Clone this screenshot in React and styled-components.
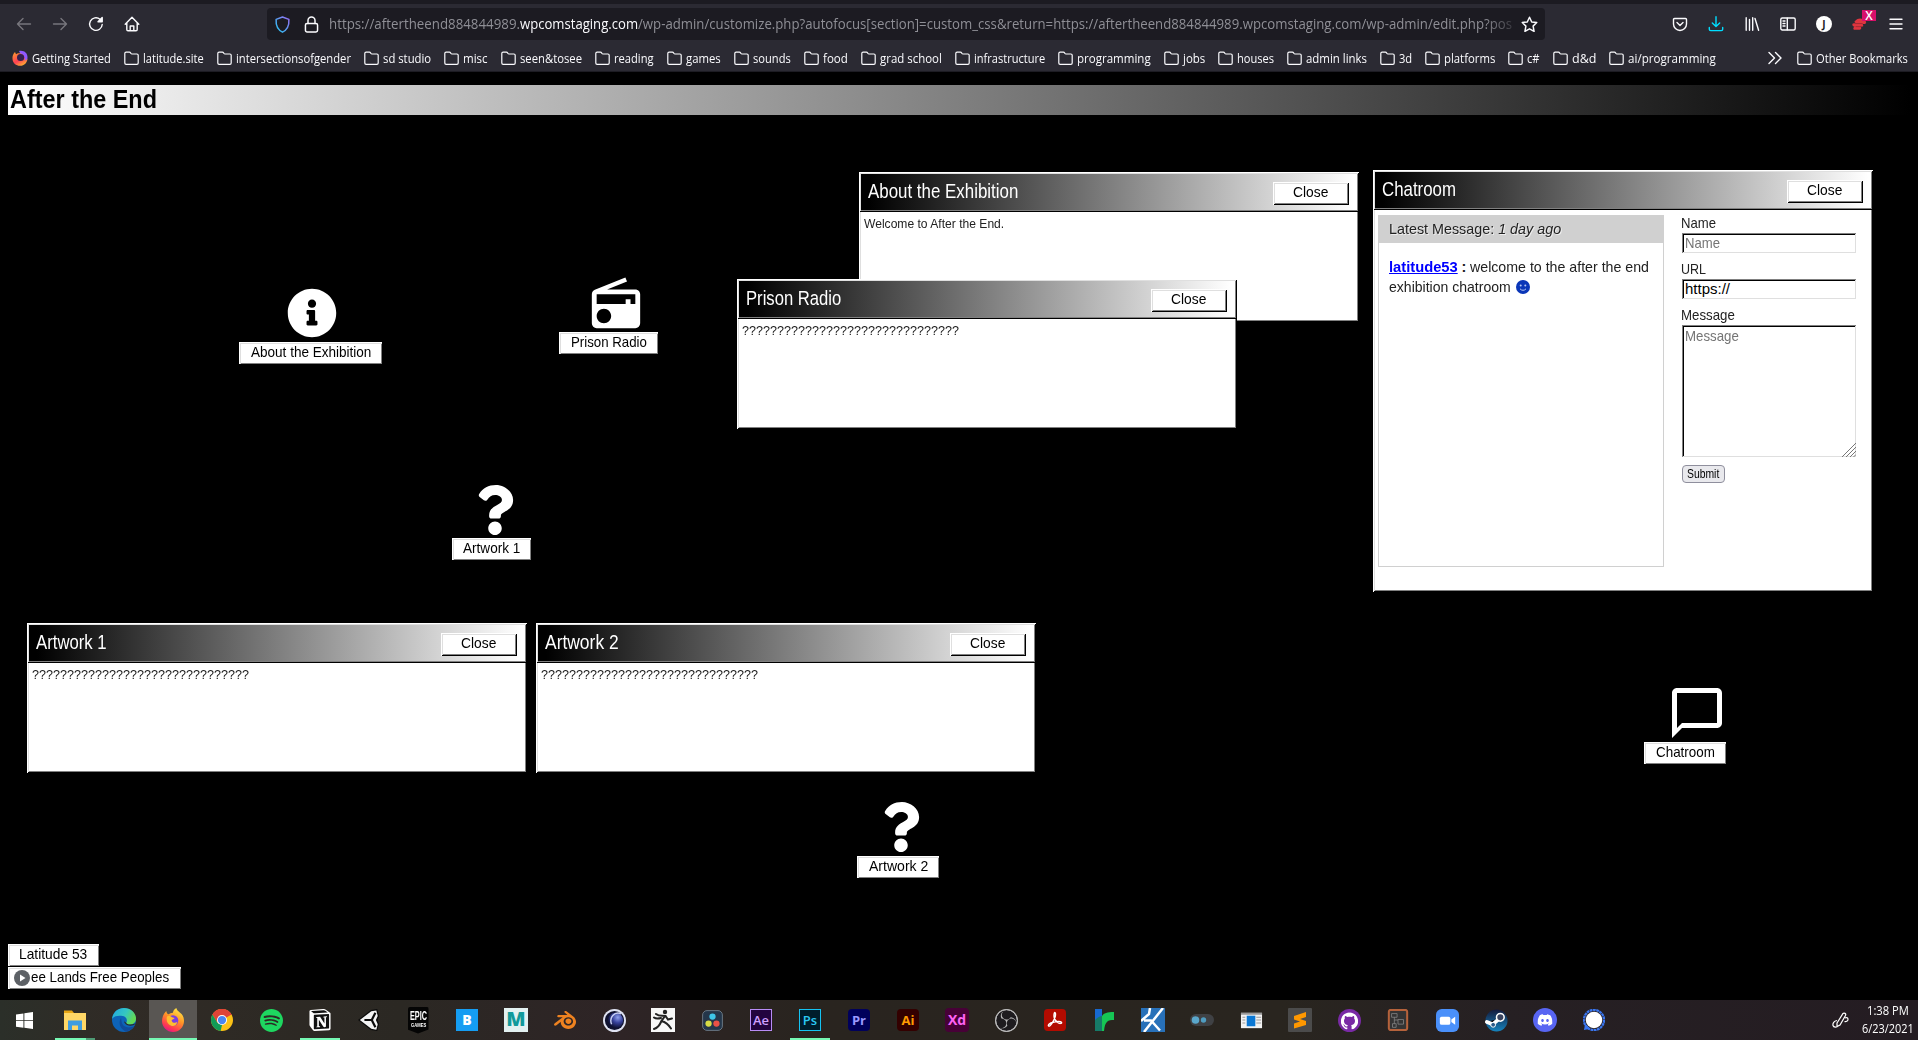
import React, { useLayoutEffect, useRef, useState } from "react";
import styled, { createGlobalStyle, css } from "styled-components";
import { FaInfoCircle, FaQuestion } from "react-icons/fa";
import { MdRadio, MdChatBubbleOutline } from "react-icons/md";
import { SiSpotify, SiBlender, SiObsstudio, SiGithub, SiDiscord, SiNotion } from "react-icons/si";

const pixelFont = `"Liberation Sans", Arial, sans-serif`;
const uiFont = `"Open Sans", "Noto Sans", sans-serif`;

const GlobalStyle = createGlobalStyle`
  * { box-sizing: border-box; }
  html, body { margin: 0; background: #000; overflow: hidden; }
  body { font-family: ${pixelFont}; }
`;

/* ---------- text squeezed to a set width ---------- */
const FitBox = styled.span`
  display: inline-block;
  flex: none;
  width: ${(p) => p.$w}px;
  white-space: nowrap;
`;
const FitInner = styled.span`
  display: inline-block;
  transform-origin: 0 50%;
`;
function Fit({ w, children, className }) {
  const ref = useRef(null);
  const [scale, setScale] = useState(1);
  useLayoutEffect(() => {
    setScale(w / ref.current.offsetWidth);
  }, [w]);
  return (
    <FitBox $w={w} className={className}>
      <FitInner ref={ref} style={{ transform: `scaleX(${scale})` }}>{children}</FitInner>
    </FitBox>
  );
}

/* ---------- page frame ---------- */
const Screen = styled.div`
  width: 1918px;
  height: 1040px;
  display: flex;
  flex-direction: column;
  background: #000;
  overflow: hidden;
`;
const Browser = styled.header`
  height: 72px;
  flex: none;
  background: #2b2a33;
  border-top: 4px solid #1c1b22;
  font-family: ${uiFont};
  color: #fbfbfe;
`;
const Toolbar = styled.div`
  height: 40px;
  display: flex;
  align-items: center;
`;
const NavGroup = styled.div`
  width: 267px;
  padding-left: 16px;
  display: flex;
  align-items: center;
  gap: 20px;
`;
const Glyph = styled.svg`
  width: ${(p) => p.$s || 16}px;
  height: ${(p) => p.$s || 16}px;
  flex: none;
  fill: none;
  stroke: ${(p) => p.$c || "#fbfbfe"};
  stroke-width: ${(p) => p.$sw || 1.4};
  stroke-linecap: round;
  stroke-linejoin: round;
`;
const UrlBar = styled.div`
  width: 1278px;
  height: 32px;
  border-radius: 4px;
  background: #1c1b22;
  display: flex;
  align-items: center;
  padding: 0 7px;
`;
const UrlText = styled.div`
  margin-left: 9px;
  width: 1184px;
  height: 24px;
  line-height: 24px;
  font-size: 14px;
  display: flex;
  color: #8f8f96;
  mask-image: linear-gradient(to right, #000 1155px, rgba(0, 0, 0, 0.25) 1184px);
`;
const Domain = styled(Fit)`
  color: #fbfbfe;
`;
const ToolGroup = styled.div`
  flex: 1;
  display: flex;
  align-items: center;
  gap: 20px;
  padding-left: 127px;
`;
const Gap = styled.span`
  width: ${(p) => p.$w}px;
  flex: none;
`;
const Account = styled.span`
  width: 16px;
  height: 16px;
  flex: none;
  border-radius: 50%;
  background: #fff;
  color: #1c1b22;
  font-size: 10px;
  font-weight: 700;
  line-height: 16px;
  text-align: center;
`;
const Extension = styled.span`
  position: relative;
  width: 16px;
  height: 16px;
  display: flex;
`;
const Badge = styled.span`
  position: absolute;
  left: 10px;
  top: -6px;
  width: 14px;
  height: 11px;
  background: #d7106a;
  color: #fff;
  font-size: 12px;
  font-weight: 600;
  line-height: 11px;
  text-align: center;
`;
const Bookmarks = styled.nav`
  height: 28px;
  display: flex;
  align-items: center;
  padding: 1px 10px 0 12px;
  border-bottom: 1px solid #1d1c23;
  font-size: 12px;
`;
const Bookmark = styled.div`
  display: flex;
  align-items: center;
  gap: 4px;
  margin-right: ${(p) => (p.$last ? 0 : 13)}px;
`;
const Overflow = styled.div`
  margin-left: auto;
  margin-right: 14px;
  display: flex;
`;

const bookmarks = [
  ["latitude.site", 61], ["intersectionsofgender", 115], ["sd studio", 48], ["misc", 25],
  ["seen&tosee", 62], ["reading", 40], ["games", 35], ["sounds", 38], ["food", 25],
  ["grad school", 62], ["infrastructure", 71], ["programming", 74], ["jobs", 22], ["houses", 37],
  ["admin links", 61], ["3d", 13], ["platforms", 51], ["c#", 13], ["d&d", 24], ["ai/programming", 88],
];
const Folder = () => (
  <Glyph $s={15} $sw={1.2} viewBox="0 0 15 15">
    <path d="M.8 12V2.500c0-.8.5-1.300 1.300-1.300h3.300c.8 0 1 .4 1.400 1 .3.5.6.8 1.200.8h4.900c.8 0 1.300.5 1.300 1.300V12c0 .8-.5 1.300-1.300 1.300H2.100C1.300 13.300.8 12.800.8 12z" />
  </Glyph>
);
const FirefoxMark = ({ size }) => (
  <svg width={size} height={size} viewBox="0 0 24 24">
    <defs>
      <linearGradient id={`fx${size}`} x1="0.8" y1="0" x2="0.3" y2="1">
        <stop offset="0" stopColor="#fff04a" />
        <stop offset=".45" stopColor="#ff9526" />
        <stop offset=".8" stopColor="#ff3b50" />
        <stop offset="1" stopColor="#e31587" />
      </linearGradient>
    </defs>
    <path fill={`url(#fx${size})`} d="M22.500 9.500C21.800 6.800 20 5.300 18.500 4.200 17 3 15.800 2 15.300 0c-2 1-3.200 3-3.400 4.800-1.800.1-3.200.7-4.200 1.500C6.300 6 5.600 4.800 5.300 3 3.500 4.500 1 8.500 1 13c0 6 4.900 11 11 11s11-4.800 11-11c0-1.200-.2-2.500-.5-3.500z" />
    <circle cx="12" cy="12.600" r="5.300" fill="#7a3fe0" />
    <path fill="#ffbd2e" d="M6 8.500c2-.8 3.800-.3 5 .8l2.600.6c-.3 1.200-2.600 1.300-3 2.300.2 2.600 3.400 3.500 5.800 1.600-.8 3.400-3.400 4.800-6.200 4C6.800 17 4.800 13 6 8.500z" />
  </svg>
);
const FirefoxOld = () => (
  <svg width="16" height="16" viewBox="0 0 16 16">
    <defs>
      <linearGradient id="fxo" x1="0.1" y1="0" x2="0.7" y2="1">
        <stop offset="0" stopColor="#ff9a2e" /><stop offset=".6" stopColor="#ff4055" /><stop offset="1" stopColor="#ffb52e" />
      </linearGradient>
    </defs>
    <path fill="#9059ff" d="M7 1c5-1 8.500 2 8.500 6.500 0 2-1 4-3 5z" />
    <path fill="url(#fxo)" d="M3 2C1 4 .3 6 .5 9c.3 4 3.500 6.800 7.500 6.800 4.500 0 7.300-3.300 7.500-7.300-.8 1.200-1.500 1.800-2.500 2C13 7 11 3.500 7.500 3.300c-1.800 0-3 .6-3.500 1z" />
    <circle cx="8.600" cy="7.500" r="3.600" fill="#35204f" />
  </svg>
);

function BrowserChrome() {
  return (
    <Browser>
      <Toolbar>
        <NavGroup>
          <Glyph $c="#77767d" viewBox="0 0 16 16"><path d="M14.500 8H1.500M7 2.500 1.500 8 7 13.500" /></Glyph>
          <Glyph $c="#77767d" viewBox="0 0 16 16"><path d="M1.500 8h13M9 2.500 14.500 8 9 13.500" /></Glyph>
          <Glyph viewBox="0 0 16 16"><path d="M14.200 8.500A6.300 6.300 0 1 1 12 3.300l1 .9" /><path d="M14.200 1.500v4.200H10z" fill="#fbfbfe" /></Glyph>
          <Glyph viewBox="0 0 16 16"><path d="M1.200 8.200 8 1.300l6.800 6.900M2.800 7v6.600c0 .7.400 1.200 1.200 1.200h8c.8 0 1.200-.5 1.200-1.200V7M6.200 14.500v-4.500h3.600v4.500" /></Glyph>
        </NavGroup>
        <UrlBar>
          <Glyph $s={17} viewBox="0 0 16 16" $c="url(#shield)">
            <defs><linearGradient id="shield" x1="0" y1="1" x2="1" y2="0"><stop offset="0" stopColor="#20c8f0" /><stop offset="1" stopColor="#9a6cf5" /></linearGradient></defs>
            <path d="M8 1 14 3.200C14.400 9 12.500 13 8 15.200 3.500 13 1.600 9 2 3.200z" />
          </Glyph>
          <Gap $w={12} />
          <Glyph $s={17} viewBox="0 0 16 16"><rect x="2.300" y="7" width="11.400" height="8" rx="1.500" /><path d="M4.700 7V4.300a3.300 3.300 0 0 1 6.600 0V7" /></Glyph>
          <UrlText>
            <Fit w={191}>https://aftertheend884844989.</Fit>
            <Domain w={118}>wpcomstaging.com</Domain>
            <Fit w={874}>/wp-admin/customize.php?autofocus[section]=custom_css&amp;return=https://aftertheend884844989.wpcomstaging.com/wp-admin/edit.php?pos</Fit>
          </UrlText>
          <Gap $w={8} />
          <Glyph $s={17} viewBox="0 0 16 16"><path d="m8 1.200 2.100 4.400 4.700.6-3.400 3.300.9 4.900L8 12.100l-4.300 2.300.9-4.900L1.200 6.200l4.700-.6z" /></Glyph>
        </UrlBar>
        <ToolGroup>
          <Glyph viewBox="0 0 16 16"><path d="M2.500 2.500h11c.600 0 1 .400 1 1V8a6.500 6.500 0 0 1-13 0V3.500c0-.600.400-1 1-1zM5 6.500 8 9.400l3-2.900" /></Glyph>
          <Glyph $c="#00ddff" viewBox="0 0 16 16"><path d="M8 .8v9.500M4.300 7 8 10.500 11.700 7M1.300 11.500v1.700c0 .8.600 1.400 1.400 1.400h10.600c.8 0 1.400-.6 1.400-1.400v-1.700" /></Glyph>
          <Glyph viewBox="0 0 16 16"><path d="M2.200 1.700v12.600M5.500 3.500v10.800M8.700 1.700v12.600M11 2.500l3.600 11.800" /></Glyph>
          <Glyph viewBox="0 0 16 16"><rect x=".8" y="2" width="14.400" height="12" rx="1.500" /><path d="M7.300 2.200v11.600M3 5h2M3 7.500h2M3 10h2" /></Glyph>
          <Account>J</Account>
          <Extension>
            <svg width="18" height="16" viewBox="0 0 18 16"><path fill="#e0353f" d="M4 4c2-3 8-3 11 0l1 2-1 2-3 0c1 2 1 3-1 3l-1 0c1 2 0 3.500-2 3.500H3c-2 0-2-3 0-3.500C1 11-.5 9 1 7.500L4 7C2 6 3 4.500 4 4z" /><path stroke="#8c2630" strokeWidth=".8" d="M3 7.500h9M4 11h7" /></svg>
            <Badge>X</Badge>
          </Extension>
          <Glyph viewBox="0 0 16 16"><path d="M2 3.200h12M2 8h12M2 12.800h12" /></Glyph>
        </ToolGroup>
      </Toolbar>
      <Bookmarks>
        <Bookmark><FirefoxOld /><Fit w={79}>Getting Started</Fit></Bookmark>
        {bookmarks.map(([name, w]) => (
          <Bookmark key={name}><Folder /><Fit w={w}>{name}</Fit></Bookmark>
        ))}
        <Overflow>
          <Glyph viewBox="0 0 16 16"><path d="m2 2.500 5.500 5.500L2 13.500M8.500 2.500 14 8l-5.500 5.500" /></Glyph>
        </Overflow>
        <Bookmark $last><Folder /><Fit w={92}>Other Bookmarks</Fit></Bookmark>
      </Bookmarks>
    </Browser>
  );
}

/* ---------- desktop ---------- */
const raised = css`
  box-shadow: inset 1px 1px #fff, inset -1px -1px #000, inset 2px 2px #dfdfdf, inset -2px -2px #808080;
`;
const Desktop = styled.main`
  position: relative;
  flex: 1;
  padding: 13px 8px 11px;
  display: flex;
  flex-direction: column;
  justify-content: space-between;
`;
const Banner = styled.h1`
  margin: 0;
  height: 30px;
  padding-left: 2px;
  background: linear-gradient(to right, #fff, #000);
  font-size: 25px;
  line-height: 28px;
  font-weight: 700;
  color: #000;
`;
const FooterLinks = styled.div`
  display: flex;
  flex-direction: column;
  align-items: flex-start;
  gap: 1px;
`;
const Tag = styled.button`
  position: relative;
  height: 22px;
  width: ${(p) => p.$w}px;
  padding: 0 0 2px ${(p) => p.$pl || 0}px;
  border: 0;
  background: #fff;
  box-shadow: inset 1px 1px #fff, inset 2px 2px #dfdfdf, inset -1px -1px #808080;
  font: 15px/20px ${pixelFont};
  color: #000;
  text-align: ${(p) => (p.$pl ? "left" : "center")};
`;
const CloseButton = styled(Tag)`
  height: 23px;
  padding: 0 2px 3px 0;
  ${raised}
`;
const PlayDot = styled.svg`
  position: absolute;
  left: 6px;
  top: 3px;
  width: 16px;
  height: 16px;
`;
const Shortcut = styled.div`
  position: absolute;
  left: ${(p) => p.$x}px;
  top: ${(p) => p.$y}px;
  width: ${(p) => p.$w}px;
  display: flex;
  flex-direction: column;
  color: #fff;
`;
const Picture = styled.div`
  margin-top: ${(p) => p.$dy || 0}px;
  height: ${(p) => 54 - (p.$dy || 0)}px;
  padding-left: ${(p) => p.$pl}px;
  svg {
    display: block;
    overflow: visible;
  }
`;
const Win = styled.section`
  position: absolute;
  left: ${(p) => p.$x}px;
  top: ${(p) => p.$y}px;
  width: 500px;
  height: ${(p) => p.$h || 150}px;
  display: flex;
  flex-direction: column;
`;
const WinTitle = styled.div`
  height: 40px;
  flex: none;
  display: flex;
  justify-content: space-between;
  padding: 10px 10px 0 9px;
  background: linear-gradient(to right, #000 2%, #fff 99%);
  ${raised}
  color: #fff;
  font-size: 20.5px;
  line-height: 17px;
`;
const WinBody = styled.div`
  flex: 1;
  display: flex;
  background: #fff;
  padding: 5px;
  box-shadow: inset 1px 0 #fff, inset -1px -1px #000, inset 2px 0 #dfdfdf, inset -2px -2px #808080;
  font-size: 12px;
  line-height: 15px;
  color: #222;
`;
function AppWindow({ x, y, h, title, tw, children }) {
  return (
    <Win $x={x} $y={y} $h={h}>
      <WinTitle>
        <Fit w={tw}>{title}</Fit>
        <CloseButton $w={76}><Fit w={35}>Close</Fit></CloseButton>
      </WinTitle>
      <WinBody>{children}</WinBody>
    </Win>
  );
}

const Log = styled.div`
  width: 286px;
  height: 352px;
  border: 1px solid #d0d0d0;
  font-size: 14.5px;
  line-height: 20px;
`;
const LogHead = styled.div`
  height: 27px;
  line-height: 27px;
  padding-left: 10px;
  background: #d0d0d0;
  text-shadow: 1px 1px #eee;
`;
const LogLine = styled.div`
  display: flex;
  align-items: center;
  height: 20px;
  margin-left: 10px;
  margin-top: ${(p) => p.$mt || 0}px;
`;
const User = styled(Fit)`
  font-weight: 700;
  color: #00f;
  span {
    text-decoration: underline;
  }
`;
const Colon = styled.b`
  width: 12px;
  text-align: center;
`;
const Form = styled.form`
  margin-left: 17px;
  width: 176px;
  font-size: 15px;
  display: flex;
  flex-direction: column;
`;
const Label = styled.label`
  height: ${(p) => p.$h}px;
  line-height: 16px;
`;
const sunken = css`
  margin-left: 1px;
  width: 174px;
  border: 0;
  background: #fff;
  box-shadow: inset 1px 1px #808080, inset -1px -1px #dfdfdf, inset 2px 2px #000;
  color: ${(p) => (p.$hint ? "#757575" : "#000")};
  padding-left: 3px;
`;
const Field = styled.div`
  ${sunken}
  height: 20px;
  line-height: 20px;
  margin-bottom: 8px;
`;
const Area = styled.div`
  ${sunken}
  position: relative;
  height: 132px;
  line-height: 22px;
  margin-bottom: 8px;
`;
const Grip = styled.svg`
  position: absolute;
  right: 0;
  bottom: 0;
  width: 14px;
  height: 14px;
`;
const Submit = styled.button`
  margin-left: 1px;
  width: 43px;
  height: 18px;
  padding: 0 1px 0 0;
  border: 1px solid #8f8f9d;
  border-radius: 4px;
  background: #e9e9ed;
  font: 12px/15px ${pixelFont};
  color: #000;
`;

const riddle = "?".repeat(31);

/* ---------- taskbar ---------- */
const Taskbar = styled.footer`
  height: 40px;
  flex: none;
  display: flex;
  align-items: center;
  gap: 1px;
  background: linear-gradient(to right, #2b2f29 0, #302b26 110px, #2b2823 400px, #2e2426 620px, #29241f 800px, #29251f 1280px, #262023 1500px, #241c22 1918px);
`;
const Task = styled.div`
  position: relative;
  width: 48px;
  height: 40px;
  display: flex;
  align-items: center;
  justify-content: center;
  background: ${(p) => (p.$active ? "#595653" : "transparent")};
  &::after {
    content: "";
    display: ${(p) => (p.$line ? "block" : "none")};
    position: absolute;
    bottom: 0;
    left: ${(p) => (p.$active ? 0 : 4)}px;
    right: ${(p) => (p.$active ? 0 : 4)}px;
    height: 2px;
    background: ${(p) => (p.$line === "multi" ? "linear-gradient(to right, #76f9b4 31px, #4f9b75 31px)" : "#76f9b4")};
  }
`;
const Tile = styled.span`
  width: ${(p) => p.$s || 22}px;
  height: ${(p) => p.$s || 22}px;
  display: flex;
  align-items: center;
  justify-content: center;
  border-radius: ${(p) => p.$r || 0}px;
  background: ${(p) => p.$bg};
  border: ${(p) => (p.$line ? `1.5px solid ${p.$line}` : "0")};
  color: ${(p) => p.$c};
  font: ${(p) => p.$w || 600} ${(p) => p.$f || 13}px/1 ${uiFont};
`;
const EpicTile = styled.span`
  width: 21px;
  height: 27px;
  padding-top: 3px;
  background: #050505;
  border-radius: 2px;
  clip-path: polygon(0 0, 100% 0, 100% 85%, 50% 100%, 0 85%);
  display: flex;
  flex-direction: column;
  align-items: center;
  color: #fff;
  font: 700 12px/12px "Liberation Sans", sans-serif;
`;
const EpicSub = styled.span`
  font-size: 5px;
  line-height: 6px;
`;
const MayaTile = styled(Tile)`
  width: 24px;
  height: 24px;
  padding-bottom: 3px;
`;
const Tray = styled.div`
  margin-left: auto;
  display: flex;
  align-items: center;
  gap: 13px;
  padding-right: 4px;
`;
const Clock = styled.div`
  display: flex;
  flex-direction: column;
  align-items: center;
  font: 12px/18px ${uiFont};
  color: #fff;
`;
const S = ({ children, s = 24 }) => <svg width={s} height={s} viewBox="0 0 24 24">{children}</svg>;

const tasks = [
  { line: "multi", icon: <S><path fill="#e8a614" d="M1 2.500h8l2 2.500v3H1z" /><path fill="#ffd766" d="M1 5h22v17H1z" /><path fill="#3f9de0" d="M5 12.500h14V22h-4v-4.500H9V22H5z" /></S> },
  { icon: <S><defs><linearGradient id="ed" x1="0" y1="0" x2="1" y2=".4"><stop offset="0" stopColor="#1fa5e6" /><stop offset=".6" stopColor="#35c8c0" /><stop offset="1" stopColor="#62d957" /></linearGradient></defs><circle cx="12" cy="12" r="12" fill="#0d63b8" /><path fill="url(#ed)" d="M0 11C1 4 6 0 12 0c7 0 12 5 12 10.500 0 4-3 6-6.500 6-2.500 0-3.800-.8-3.300-2 1.300-1.500 1-5.500-3.400-6.500C6 7 2 8 0 11z" /><path fill="#104a9a" d="M9 10c-3 5-1 11 5 13.500 3.500-.5 6.500-2.500 8.500-5.500-6 3-12 1-12.800-4z" /><path fill="#2b2823" d="M12 12.500c0 3.500 4 6.500 10 4.500l1.500-1.500C20 17 14.500 17 14.200 14.500 13 14.500 12.300 13.500 12 12.500z" /></S> },
  { active: true, line: true, icon: <FirefoxMark size={24} /> },
  { icon: <S s={22}><circle cx="12" cy="12" r="12" fill="#fbc116" /><path fill="#df4437" d="M1.600 6A12 12 0 0 1 22.400 6L12 12z" /><path fill="#df4437" d="M1.600 6 7 15l5-8.500h10.600C20 2 16 0 12 0 8 0 4 2 1.600 6z" /><path fill="#119b57" d="M1.600 6 7 15l5 2.500L10.500 24C4 23 0 17.500 0 12c0-2 .5-4 1.600-6z" /><circle cx="12" cy="12" r="5.500" fill="#fff" /><circle cx="12" cy="12" r="4.500" fill="#4a86f0" /></S> },
  { icon: <SiSpotify size={23} color="#1ed760" /> },
  { line: true, icon: <S s={22}><path fill="#111" d="M1 1h17l5 4v18H5l-4-5z" /><SiNotion x="0" y="0" size={24} color="#fff" /></S> },
  { icon: <S s={22}><path fill="#0c0c0c" d="M0 12 14 1l7-1 2 8-1.500 4 1.500 4-2 8-7-1z" /><path fill="#f4f4f4" d="M2 12 14.500 2.500 20 1.500l1.500 6-2 4.500 2 4.500-1.500 6-5.500-1z" /><path fill="none" stroke="#0c0c0c" strokeWidth="2.400" d="M7 12h8M15 12l4-8M15 12l4 8" /></S> },
  { icon: <EpicTile><Fit w={17}>EPIC</Fit><EpicSub><Fit w={15}>GAMES</Fit></EpicSub></EpicTile> },
  { icon: <Tile $bg="#159df2" $c="#fff" $w={800} $f={14}>B</Tile> },
  { icon: <MayaTile $bg="#e3f1f1" $c="#119a9b" $w={800} $f={20}>M</MayaTile> },
  { icon: <SiBlender size={22} color="#ee8220" /> },
  { icon: <S s={23}><defs><radialGradient id="c4" cx=".65" cy=".3" r=".7"><stop offset="0" stopColor="#8fa0ee" /><stop offset=".5" stopColor="#35409a" /><stop offset="1" stopColor="#0d1030" /></radialGradient></defs><circle cx="12" cy="12" r="12" fill="#dfe3f2" /><circle cx="12" cy="12" r="10" fill="#0f1230" /><circle cx="13" cy="12" r="8" fill="url(#c4)" /><path fill="none" stroke="#c8d0f4" strokeWidth="1.500" d="M19 5c-7-3-13 4-10 11" /></S> },
  { icon: <S><path fill="#f7f7f7" d="M0 0h24v24H0z" /><circle cx="14" cy="4" r="2.200" fill="#222" /><path fill="none" stroke="#222" strokeWidth="2" strokeLinecap="round" d="M5 6c3 2.500 6 1.500 9 2l-3.500 5c4 1 7 3.500 9.500 7.500M10 14c-1.500 3.500-4 6-7 7M14.500 8l2.500 3.500 4-1M3 9.500c2 1.500 5 1 7 .5" /></S> },
  { icon: <S s={21}><rect x=".7" y=".7" width="22.600" height="22.600" rx="5" fill="#24364a" stroke="#71808d" /><circle cx="12" cy="7.500" r="3.600" fill="#3fc6e8" /><circle cx="7.500" cy="15.500" r="3.600" fill="#d6dc45" /><circle cx="16.500" cy="15.500" r="3.600" fill="#ea5146" /></S> },
  { icon: <Tile $bg="#22043f" $line="#b88cf5" $c="#cfa0ff">Ae</Tile> },
  { line: true, icon: <Tile $bg="#001d2c" $line="#15c3f2" $c="#2bc8f5">Ps</Tile> },
  { icon: <Tile $bg="#00005b" $c="#9999ff" $r={4} $w={700}>Pr</Tile> },
  { icon: <Tile $bg="#330000" $c="#ff9a00" $r={4} $w={700}>Ai</Tile> },
  { icon: <Tile $bg="#470137" $c="#ff61f6" $r={4} $s={24} $f={14} $w={700}>Xd</Tile> },
  { icon: <S s={23}><circle cx="12" cy="12" r="11.300" fill="#1e1c1f" stroke="#cfcfcf" /><SiObsstudio size={24} color="#b9b9b9" /></S> },
  { icon: <S s={22}><rect width="24" height="24" rx="4" fill="#b30b00" /><path fill="none" stroke="#fff" strokeWidth="1.500" d="M5 18.500c-1-1 1-3 5-4s8-1.300 9 0-2 2-4.500 0S10.500 9 11 5.500s2.500-1 1 3.500-5.500 11-7 9.500z" /></S> },
  { icon: <S><path fill="#1769d1" d="M3 1h7v22H3z" /><path fill="#16c655" d="M10 8c2-3 5-4 12-4v8c-6 0-9 1-10 11H3c0-6 3-11 7-15z" /><path fill="#167a68" d="M3 12c2-2 5-4 7-4v15H3z" /></S> },
  { icon: <S><path fill="#2871b9" d="M0 0h24v24H0z" /><path fill="none" stroke="#fff" strokeWidth="2.500" d="M22 0 3 24M9 0 8 6 0 13M3 12.500l7 0 9 10" /></S> },
  { icon: <S><rect x="0" y="6" width="24" height="12" rx="6" fill="#3f4144" /><circle cx="5.500" cy="12" r="3.800" fill="#5aa7cb" /><circle cx="13.500" cy="12" r="2.700" fill="#4f9cc0" /></S> },
  { icon: <S s={23}><path fill="#f2f2f2" d="M1 4h22v16H1z" /><path fill="#999" d="M1 4h22v2H1zM2.500 8h3v1h-3zm0 3h3v1h-3zm0 3h3v1h-3zM17 8h5v1h-5zm0 3h5v1h-5zm0 3h5v1h-5z" /><path fill="#0b78d4" d="M7 7h9v11H7z" /></S> },
  { icon: <S><rect width="24" height="24" rx="1" fill="#4b4b4b" /><path fill="#ff9800" d="m6 8 12-4v5l-6 2 6 2v4L6 20.500v-5l6-2-6-2z" /></S> },
  { icon: <S s={23}><circle cx="12" cy="12" r="12" fill="#792aa5" /><SiGithub x="3" y="3.500" size={18} color="#fff" /></S> },
  { icon: <S s={22}><rect x="2" y="1" width="20" height="22" rx="2" fill="#343434" stroke="#b5623b" strokeWidth="2.200" /><path fill="none" stroke="#8a8a8a" strokeWidth=".8" d="M5 5h6v4H5zM12 11.500h6v5h-6zM6 16h4v4H6zM8 9v7M8 12h4" /></S> },
  { icon: <S s={23}><rect width="24" height="24" rx="6" fill="#4a90fa" /><rect x="4" y="8" width="11" height="8.500" rx="2" fill="#fff" /><path fill="#fff" d="m16 11 4-3v8.500l-4-3z" /></S> },
  { icon: <S s={23}><defs><linearGradient id="st" x1="0" y1="0" x2="0" y2="1"><stop offset="0" stopColor="#141a3c" /><stop offset="1" stopColor="#1683bd" /></linearGradient></defs><circle cx="12" cy="12" r="11.500" fill="url(#st)" /><path stroke="#fff" strokeWidth="4" strokeLinecap="round" d="m2 13.500 6 2.500 7-6" /><circle cx="16" cy="8.700" r="4" fill="#39435f" stroke="#fff" strokeWidth="1.600" /><circle cx="8.500" cy="16.500" r="2.500" fill="#2a5a88" stroke="#fff" /></S> },
  { icon: <S><circle cx="12" cy="12" r="12" fill="#5865f2" /><SiDiscord x="4.500" y="4.500" size={15} color="#fff" /></S> },
  { icon: <S s={22}><circle cx="12" cy="12" r="11" fill="none" stroke="#3a76f0" strokeWidth="2.500" strokeDasharray="3 .6" /><path fill="#3a76f0" d="m1 23 1.500-7L8 21.500z" /><circle cx="12" cy="12" r="9" fill="#fff" /></S> },
];

function WindowsTaskbar() {
  return (
    <Taskbar>
      <Task><S s={17}><path fill="#fff" d="M0 3.500 10.500 2v9.500H0zM11.800 1.800 24 0v11.500H11.800zM0 12.800h10.500v9.500L0 20.800zM11.800 12.800H24V24l-12.200-1.600z" /></S></Task>
      <Gap $w={1} />
      {tasks.map((t, i) => (
        <Task key={i} $active={t.active} $line={t.line}>{t.icon}</Task>
      ))}
      <Tray>
        <svg width="17" height="17" viewBox="0 0 17 17" fill="none" stroke="#fff" strokeWidth="1.200"><path d="M5 11 11 1.500c1-1 3.500 0 2.500 2L8 13l-3 1.500zM5 8.500c-3 .5-4.500 3-4 5 .5 2 4 2 5 .5M13 6c2-1 3 0 3 1.500S14 10 12.500 9.500" /></svg>
        <Clock><Fit w={42}>1:38 PM</Fit><Fit w={52}>6/23/2021</Fit></Clock>
      </Tray>
    </Taskbar>
  );
}

export default function App() {
  return (
    <Screen>
      <GlobalStyle />
      <BrowserChrome />
      <Desktop>
        <Banner><Fit w={147}>After the End</Fit></Banner>

        <Shortcut $x={239} $y={216} $w={143}>
          <Picture $pl={48}><FaInfoCircle size={50} /></Picture>
          <Tag $w={143}><Fit w={120}>About the Exhibition</Fit></Tag>
        </Shortcut>
        <Shortcut $x={559} $y={206} $w={99}>
          <Picture $pl={28} $dy={-3}><MdRadio size={58} /></Picture>
          <Tag $w={99}><Fit w={76}>Prison Radio</Fit></Tag>
        </Shortcut>
        <Shortcut $x={452} $y={412} $w={79}>
          <Picture $pl={18} $dy={1}><FaQuestion size={50} /></Picture>
          <Tag $w={79}><Fit w={57}>Artwork 1</Fit></Tag>
        </Shortcut>
        <Shortcut $x={857} $y={730} $w={82}>
          <Picture $pl={19}><FaQuestion size={50} /></Picture>
          <Tag $w={82}><Fit w={59}>Artwork 2</Fit></Tag>
        </Shortcut>
        <Shortcut $x={1644} $y={616} $w={82}>
          <Picture $pl={23} $dy={-5}><MdChatBubbleOutline size={60} /></Picture>
          <Tag $w={82}><Fit w={59}>Chatroom</Fit></Tag>
        </Shortcut>

        <AppWindow x={859} y={100} title="About the Exhibition" tw={150}>
          <Fit w={140}>Welcome to After the End.</Fit>
        </AppWindow>
        <AppWindow x={737} y={207} title="Prison Radio" tw={95}>
          <Fit w={217}>{riddle}</Fit>
        </AppWindow>
        <AppWindow x={27} y={551} title="Artwork 1" tw={71}>
          <Fit w={217}>{riddle}</Fit>
        </AppWindow>
        <AppWindow x={536} y={551} title="Artwork 2" tw={74}>
          <Fit w={217}>{riddle}</Fit>
        </AppWindow>
        <AppWindow x={1373} y={98} h={422} title="Chatroom" tw={74}>
          <Log>
            <LogHead><Fit w={172}>Latest Message: <i>1 day ago</i></Fit></LogHead>
            <LogLine $mt={14}><User w={69}>latitude53</User><Colon>:</Colon><Fit w={179}>welcome to the after the end</Fit></LogLine>
            <LogLine>
              <Fit w={122}>exhibition chatroom</Fit>
              <Gap $w={5} />
              <svg width="14" height="14" viewBox="0 0 14 14"><circle cx="7" cy="7" r="7" fill="#0a36b8" /><circle cx="4.700" cy="5.500" r="1" fill="#b9c8f2" /><circle cx="9.300" cy="5.500" r="1" fill="#b9c8f2" /><path d="M4 8.800c1.500 2 4.500 2 6 0" fill="none" stroke="#b9c8f2" /></svg>
            </LogLine>
          </Log>
          <Form>
            <Label $h={18}><Fit w={35}>Name</Fit></Label>
            <Field $hint><Fit w={35}>Name</Fit></Field>
            <Label $h={18}><Fit w={25}>URL</Fit></Label>
            <Field><Fit w={45}>https://</Fit></Field>
            <Label $h={18}><Fit w={54}>Message</Fit></Label>
            <Area $hint>
              <Fit w={54}>Message</Fit>
              <Grip viewBox="0 0 14 14"><path d="M0 14 14 0M4 14 14 4M8 14l6-6M11.500 14l2.500-2.500" stroke="#777" /></Grip>
            </Area>
            <Submit type="button"><Fit w={32}>Submit</Fit></Submit>
          </Form>
        </AppWindow>

        <FooterLinks>
          <Tag $w={91} $pl={11}><Fit w={68}>Latitude 53</Fit></Tag>
          <Tag $w={173} $pl={23}>
            <PlayDot viewBox="0 0 16 16"><circle cx="8" cy="8" r="8" fill="#5d6166" /><path d="M6 4.500v7L11.500 8z" fill="#fff" /></PlayDot>
            <Fit w={138}>ee Lands Free Peoples</Fit>
          </Tag>
        </FooterLinks>
      </Desktop>
      <WindowsTaskbar />
    </Screen>
  );
}
